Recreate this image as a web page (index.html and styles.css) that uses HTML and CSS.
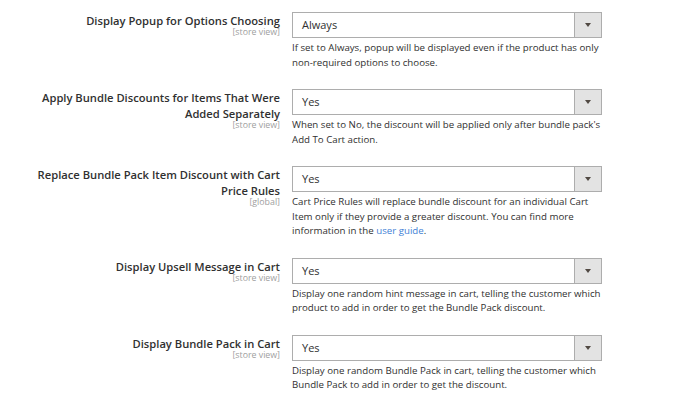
FILE: index.html
```html
<!DOCTYPE html>
<html>
<head>
<meta charset="utf-8">
<link rel="stylesheet" href="styles.css">
</head>
<body>
<div class="form">
  <div class="row">
    <div class="label">Display Popup for Options Choosing<span class="scope">[store view]</span></div>
    <div class="value">
      <div class="select"><span class="sel-text">Always</span><span class="sel-btn"><span class="arrow"></span></span></div>
      <p class="note">If set to Always, popup will be displayed even if the product has only non-required options to choose.</p>
    </div>
  </div>
  <div class="row">
    <div class="label">Apply Bundle Discounts for Items That Were Added Separately<span class="scope">[store view]</span></div>
    <div class="value">
      <div class="select"><span class="sel-text">Yes</span><span class="sel-btn"><span class="arrow"></span></span></div>
      <p class="note">When set to No, the discount will be applied only after bundle pack's Add To Cart action.</p>
    </div>
  </div>
  <div class="row">
    <div class="label">Replace Bundle Pack Item Discount with Cart Price Rules<span class="scope">[global]</span></div>
    <div class="value">
      <div class="select"><span class="sel-text">Yes</span><span class="sel-btn"><span class="arrow"></span></span></div>
      <p class="note">Cart Price Rules will replace bundle discount for an individual Cart Item only if they provide a greater discount. You can find more information in the <a class="link" href="#">user guide</a>.</p>
    </div>
  </div>
  <div class="row">
    <div class="label">Display Upsell Message in Cart<span class="scope">[store view]</span></div>
    <div class="value">
      <div class="select"><span class="sel-text">Yes</span><span class="sel-btn"><span class="arrow"></span></span></div>
      <p class="note">Display one random hint message in cart, telling the customer which product to add in order to get the Bundle Pack discount.</p>
    </div>
  </div>
  <div class="row">
    <div class="label">Display Bundle Pack in Cart<span class="scope">[store view]</span></div>
    <div class="value">
      <div class="select"><span class="sel-text">Yes</span><span class="sel-btn"><span class="arrow"></span></span></div>
      <p class="note">Display one random Bundle Pack in cart, telling the customer which Bundle Pack to add in order to get the discount.</p>
    </div>
  </div>
</div>
</body>
</html>
```

FILE: styles.css
```css
html, body {
  margin: 0;
  padding: 0;
  background: #ffffff;
}
body {
  font-family: "Open Sans", "Liberation Sans", sans-serif;
  color: #303030;
}
.form {
  padding-top: 12px;
  padding-left: 30px;
}
.row {
  display: grid;
  grid-template-columns: 250px 310px;
  column-gap: 12px;
  margin-bottom: 19px;
}
.label {
  text-align: right;
  font-weight: 600;
  font-size: 11.2px;
  line-height: 16px;
  padding-top: 1px;
  color: #303030;
}
.scope {
  display: block;
  font-weight: 400;
  font-size: 8.8px;
  line-height: 8px;
  color: #a0a0a0;
  margin-top: -1px;
}
.select {
  display: flex;
  height: 26px;
  box-sizing: border-box;
  border: 1px solid #adadad;
  background: #ffffff;
}
.sel-text {
  flex: 1;
  font-size: 11px;
  line-height: 24px;
  padding-left: 9px;
  color: #303030;
}
.sel-btn {
  width: 26px;
  border-left: 1px solid #adadad;
  background: #e3e3e3;
  display: flex;
  align-items: center;
  justify-content: center;
}
.arrow {
  width: 0;
  height: 0;
  border-left: 3px solid transparent;
  border-right: 3px solid transparent;
  border-top: 4px solid #514943;
}
.note {
  margin: 3px 0 0 0;
  font-size: 9.7px;
  line-height: 14.5px;
  color: #303030;
}
.link {
  color: #3f7fd6;
  text-decoration: none;
}
```
